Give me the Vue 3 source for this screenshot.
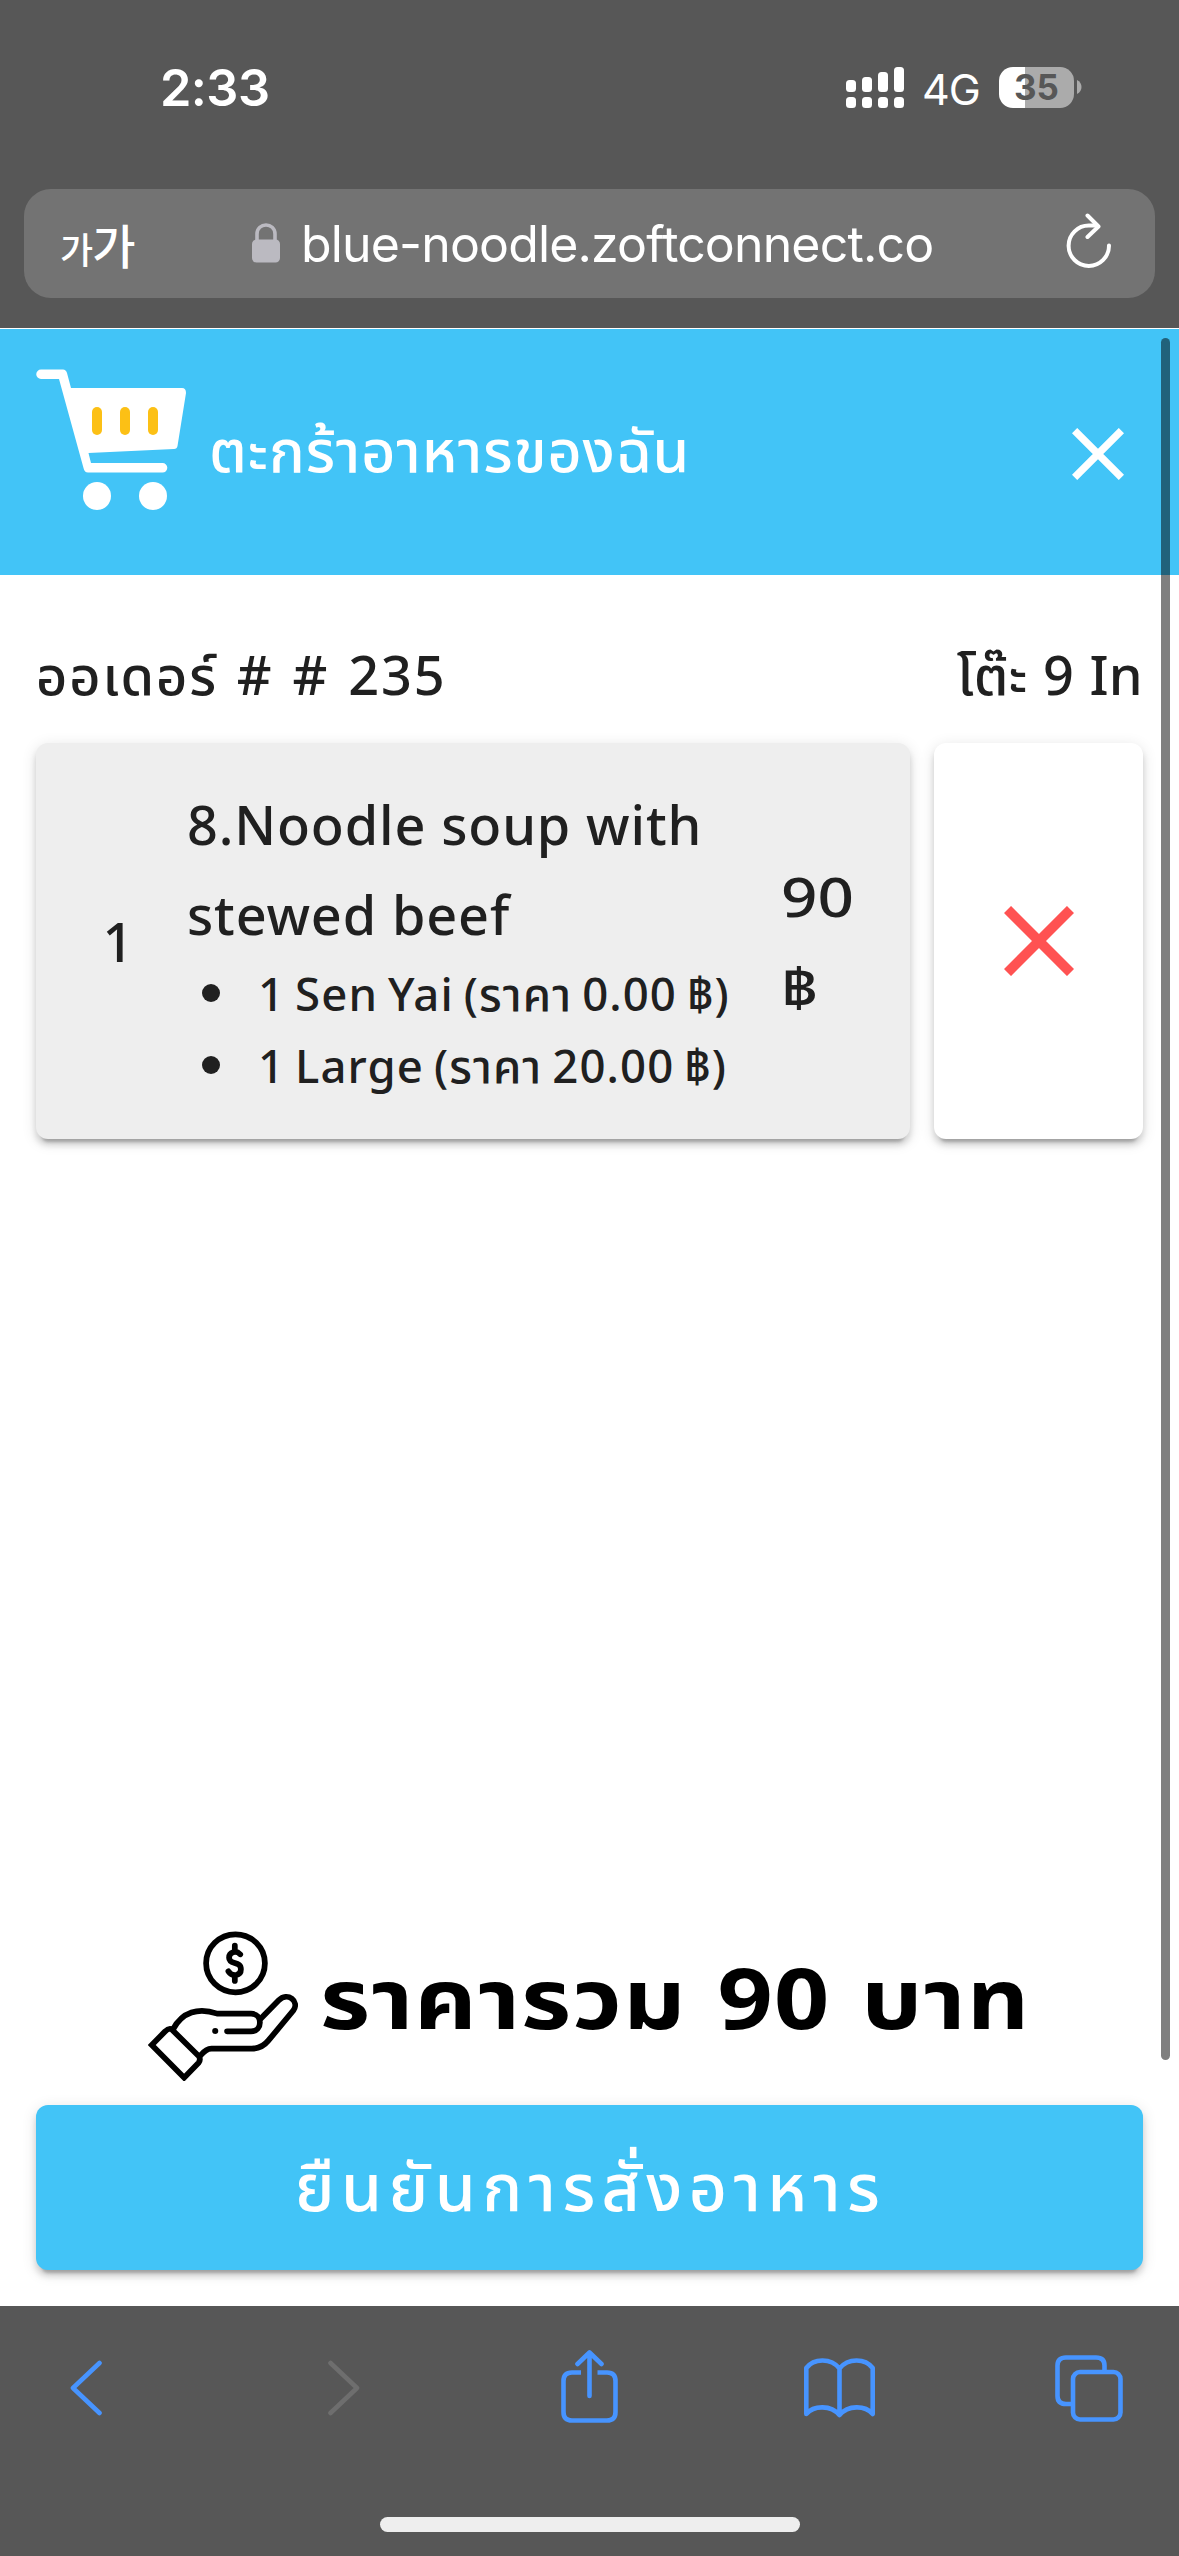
<script setup>
const order = { label: 'ออเดอร์ # # 235', table: 'โต๊ะ 9 In' }
const items = [
  {
    qty: 1,
    name: '8.Noodle soup with stewed beef',
    price: '90 ฿',
    options: ['1 Sen Yai (ราคา 0.00 ฿)', '1 Large (ราคา 20.00 ฿)'],
  },
]
const bars = [
  { x: 0, y: 13 },
  { x: 16, y: 10 },
  { x: 32, y: 5 },
  { x: 48, y: 0 },
]
</script>

<template>
  <div class="phone">
    <header class="chrome">
      <div class="status">
        <span class="time">2:33</span>
        <div class="status-right">
          <svg class="signal" width="58" height="41" viewBox="0 0 58 41" fill="#fff">
            <template v-for="b in bars" :key="b.x">
              <rect :x="b.x" :y="b.y" width="10" :height="25 - b.y" rx="3.5" />
              <rect :x="b.x" y="30" width="10" height="11" rx="3.5" />
            </template>
          </svg>
          <span class="network">4G</span>
          <div class="battery"><span>35</span></div>
          <svg class="nub" width="5" height="14" viewBox="0 0 5 14"><path d="M0 0C6 3 6 11 0 14Z" fill="#ababab" /></svg>
        </div>
      </div>
      <div class="urlbar">
        <span class="reader"><small>가</small><b>가</b></span>
        <svg class="lock" width="28" height="40" viewBox="0 0 28 40">
          <path d="M5 18V11C5 -1 23 -1 23 11V18" fill="none" stroke="#bbbac1" stroke-width="3.6" />
          <rect y="16.500" width="28" height="23" rx="4.500" fill="#bbbac1" />
        </svg>
        <span class="url">blue-noodle.zoftconnect.co</span>
        <svg class="reload" width="46" height="56" viewBox="0 0 46 56" fill="none" stroke="#fff" stroke-width="4" stroke-linecap="round" stroke-linejoin="round">
          <path d="M43 32.500A20.200 20.200 0 1 1 23 12.500H31" />
          <path d="M21.500 2.500L32.500 13.500L21.500 24" />
        </svg>
      </div>
    </header>

    <main class="page">
      <div class="cart-bar">
        <svg class="cart" width="150" height="142" viewBox="0 0 150 142">
          <path fill="#fff" d="M5 0.500H27Q30 0.500 31 4L35 19H146Q150 19 150 24L141.500 77Q141 80 138 80L52.500 84L55 94H126.500A4.800 4.800 0 0 1 126.500 103.600H52Q48.500 103.600 47.500 99L23 10H5A4.750 4.750 0 0 1 5 0.500Z" />
          <g fill="#fcc015">
            <rect x="56" y="38" width="10" height="28" rx="5" />
            <rect x="84" y="38" width="10" height="28" rx="5" />
            <rect x="112" y="38" width="10" height="28" rx="5" />
          </g>
          <circle cx="61" cy="127" r="14" fill="#fff" />
          <circle cx="117" cy="127" r="14" fill="#fff" />
        </svg>
        <h1>ตะกร้าอาหารของฉัน</h1>
        <svg class="close" width="52" height="52" viewBox="0 0 52 52" stroke="#fff" stroke-width="7.400">
          <path d="M2.600 2.600L49.400 49.400M49.400 2.600L2.600 49.400" />
        </svg>
      </div>

      <div class="order-row">
        <span class="order-no">{{ order.label }}</span>
        <span class="table-no">{{ order.table }}</span>
      </div>

      <div v-for="item in items" :key="item.name" class="item">
        <section class="card detail">
          <span class="qty">{{ item.qty }}</span>
          <div class="info">
            <p class="name">{{ item.name }}</p>
            <ul>
              <li v-for="o in item.options" :key="o">{{ o }}</li>
            </ul>
          </div>
          <span class="price">{{ item.price }}</span>
        </section>
        <button class="card remove">
          <svg width="70" height="70" viewBox="0 0 70 70" stroke="#ff5252" stroke-width="10">
            <path d="M3.500 3.500L66.500 66.500M66.500 3.500L3.500 66.500" />
          </svg>
        </button>
      </div>

      <footer class="checkout">
        <div class="total">
          <svg class="hand" width="150" height="150" viewBox="83 93 444 450" fill="none" stroke="#000" stroke-width="17" stroke-linecap="round" preserveAspectRatio="none">
            <circle cx="342" cy="190" r="87" />
            <path d="M340 137V152M340 228V243M356 163C344 150 323 156 323 173C323 196 358 182 358 208C358 228 333 232 321 214" />
            <path d="M157 388C184 336 232 321 288 341H388C423 341 423 394 388 394H317" />
            <path d="M415 358L470 301C495 274 533 303 513 332L439 422Q420 446 390 446H271Q255 446 239 466" />
            <path d="M152 387L233 468Q240 478 233 488L190 533L94 435L134 394Q143 384 152 387Z" stroke-linejoin="miter" />
            <circle cx="282" cy="393" r="9" fill="#000" stroke="none" />
          </svg>
          <strong>ราคารวม 90 บาท</strong>
        </div>
        <button class="confirm"><span>ยืนยันการสั่งอาหาร</span></button>
      </footer>
      <i class="scrollbar"></i>
    </main>

    <nav class="toolbar">
      <div class="tools">
        <svg width="32" height="56" viewBox="0 0 32 56"><path d="M29.500 3L3 28L29.500 53" /></svg>
        <svg class="disabled" width="32" height="56" viewBox="0 0 32 56"><path d="M2.500 3L29 28L2.500 53" /></svg>
        <svg width="57" height="73" viewBox="0 0 57 73">
          <path stroke-linecap="butt" d="M20 22.500H11Q2.500 22.500 2.500 31V62Q2.500 70.500 11 70.500H46Q54.500 70.500 54.500 62V31Q54.500 22.500 46 22.500H36.500" />
          <path d="M28.500 46V3M16.500 14L28.500 2.500L40.500 14" />
        </svg>
        <svg width="71" height="60" viewBox="0 0 71 60">
          <path d="M35.500 10.500V57M35.500 10.500C27 0 10 0 2.300 10V56C10 47 27 47 35.500 57C44 47 61 47 68.700 56V10C61 0 44 0 35.500 10.500" />
        </svg>
        <svg width="68" height="67" viewBox="0 0 68 67">
          <rect x="18" y="17" width="47.500" height="47.500" rx="7" />
          <path stroke-linecap="butt" d="M18 49H11Q2.500 49 2.500 41V10.500Q2.500 2.500 11 2.500H41Q49.500 2.500 49.500 10.500V17" />
        </svg>
      </div>
      <div class="home"></div>
    </nav>
  </div>
</template>

<style>
body { margin: 0; background: #fff; }
</style>

<style scoped>
* { box-sizing: border-box; }
.phone {
  width: 1179px;
  height: 2556px;
  display: flex;
  flex-direction: column;
  overflow: hidden;
  background: #fff;
  color: #202020;
  font-family: "Noto Sans", "Noto Sans Thai", "Open Sans", sans-serif;
  font-weight: 500;
}
svg { display: block; flex: none; }
button { border: 0; padding: 0; font: inherit; }
.chrome {
  height: 329px;
  flex: none;
  background: #575757;
  border-bottom: 1px solid #fff;
  color: #fff;
  font-family: Inter, "Noto Sans CJK KR", sans-serif;
  font-weight: 400;
}
.status {
  height: 189px;
  display: flex;
  justify-content: space-between;
  align-items: flex-start;
  padding: 57px 97px 0 160px;
}
.time { font-size: 50.500px; line-height: 62px; font-weight: 600; letter-spacing: -0.600px; }
.status-right { display: flex; align-items: center; height: 60px; }
.network { width: 57px; margin: 3px 20px 0 18px; font-size: 43px; letter-spacing: -1px; white-space: nowrap; }
.battery {
  width: 75px;
  height: 41px;
  border-radius: 14px;
  background: linear-gradient(90deg, #fff 26px, #ababab 26px);
  color: #575757;
  display: flex;
  align-items: center;
  justify-content: center;
  font-size: 35px;
  font-weight: 700;
}
.nub { margin-left: 3px; }
.urlbar {
  height: 109px;
  margin: 0 24px;
  padding: 0 43px 0 36px;
  border-radius: 27px;
  background: #737373;
  display: flex;
  align-items: center;
}
.reader { width: 192px; display: flex; align-items: baseline; white-space: nowrap; }
.reader small { font-size: 36px; font-weight: 500; }
.reader b { font-size: 47px; font-weight: 500; margin-left: -1px; }
.lock { margin: -1px 21px 0 0; }
.url { font-size: 50px; letter-spacing: -0.850px; white-space: nowrap; }
.reload { margin: -6px 0 0 auto; }

.page { position: relative; height: 1977px; flex: none; display: flex; flex-direction: column; }
.scrollbar { position: absolute; left: 1161px; top: 9px; width: 9px; height: 1722px; border-radius: 5px; background: rgba(0, 0, 0, 0.5); }
.cart-bar { height: 246px; flex: none; display: flex; background: #42c4f7; padding: 40px 55px 0 36px; color: #fff; }
h1 { margin: 35px 0 0 23px; font-size: 59px; line-height: 90px; font-weight: 500; letter-spacing: 0.900px; white-space: nowrap; }
.close { margin: 59px 0 0 auto; }
.order-row { margin: 54px 36px 24px; display: flex; justify-content: space-between; font-size: 54px; line-height: 90px; white-space: nowrap; }
.order-no { letter-spacing: 1.900px; word-spacing: 3px; }
.table-no { letter-spacing: 0.300px; word-spacing: 1px; }
.item { display: flex; gap: 24px; padding: 0 36px; height: 396px; }
.card { border-radius: 12px; box-shadow: 0 9px 3px -6px rgba(0, 0, 0, 0.2), 0 6px 6px rgba(0, 0, 0, 0.14), 0 3px 15px rgba(0, 0, 0, 0.12); }
.detail { width: 874px; background: #eee; display: flex; align-items: center; font-size: 54px; line-height: 90px; }
.qty { width: 151px; padding-left: 13px; text-align: center; }
.info { width: 594px; }
.name { margin: 0; width: 560px; letter-spacing: 0.850px; }
ul { margin: -2px 0 2px; padding: 0 0 0 2px; list-style: none; font-size: 45.500px; line-height: 72px; letter-spacing: 1.100px; word-spacing: -3px; }
li { display: flex; align-items: center; white-space: nowrap; }
li::before { content: ""; width: 18px; height: 18px; border-radius: 50%; background: #202020; margin: 0 38px 0 13px; }
.price { width: 80px; transform: scaleX(1.18); transform-origin: left; }
.remove { width: 209px; background: #fff; display: flex; align-items: center; justify-content: center; }
.checkout { margin-top: auto; padding: 0 36px 36px; }
.total { display: flex; padding-left: 112px; height: 174px; color: #000; }
.total strong {
  margin: 1px 0 0 22px;
  font-size: 84px;
  line-height: 130px;
  font-weight: 700;
  letter-spacing: 1px;
  word-spacing: 4px;
  white-space: nowrap;
  transform: scaleX(1.15);
  transform-origin: left;
}
.confirm { display: block; width: 100%; height: 165px; padding-top: 5px; border-radius: 12px; background: #42c4f7; color: #fff; font-size: 66px; letter-spacing: 6.400px; text-indent: 2px; box-shadow: 0 9px 3px -6px rgba(0, 0, 0, 0.2), 0 6px 6px rgba(0, 0, 0, 0.14), 0 3px 15px rgba(0, 0, 0, 0.12); }

.toolbar { flex: 1; background: #575757; }
.tools { height: 211px; padding: 44px 0 0 70px; display: flex; align-items: flex-start; }
.tools svg { fill: none; stroke: #4794ff; stroke-width: 4.600; stroke-linecap: round; stroke-linejoin: round; }
.tools svg:nth-child(1) { margin-top: 10px; }
.tools svg:nth-child(2) { margin: 10px 0 0 226px; }
.tools svg:nth-child(3) { margin-left: 201px; }
.tools svg:nth-child(4) { margin: 8px 0 0 186px; }
.tools svg:nth-child(5) { margin: 5px 0 0 180px; }
.tools .disabled { stroke: #6e6e6e; }
.home { width: 420px; height: 15px; border-radius: 8px; background: #eee; margin: 0 auto; }
</style>
